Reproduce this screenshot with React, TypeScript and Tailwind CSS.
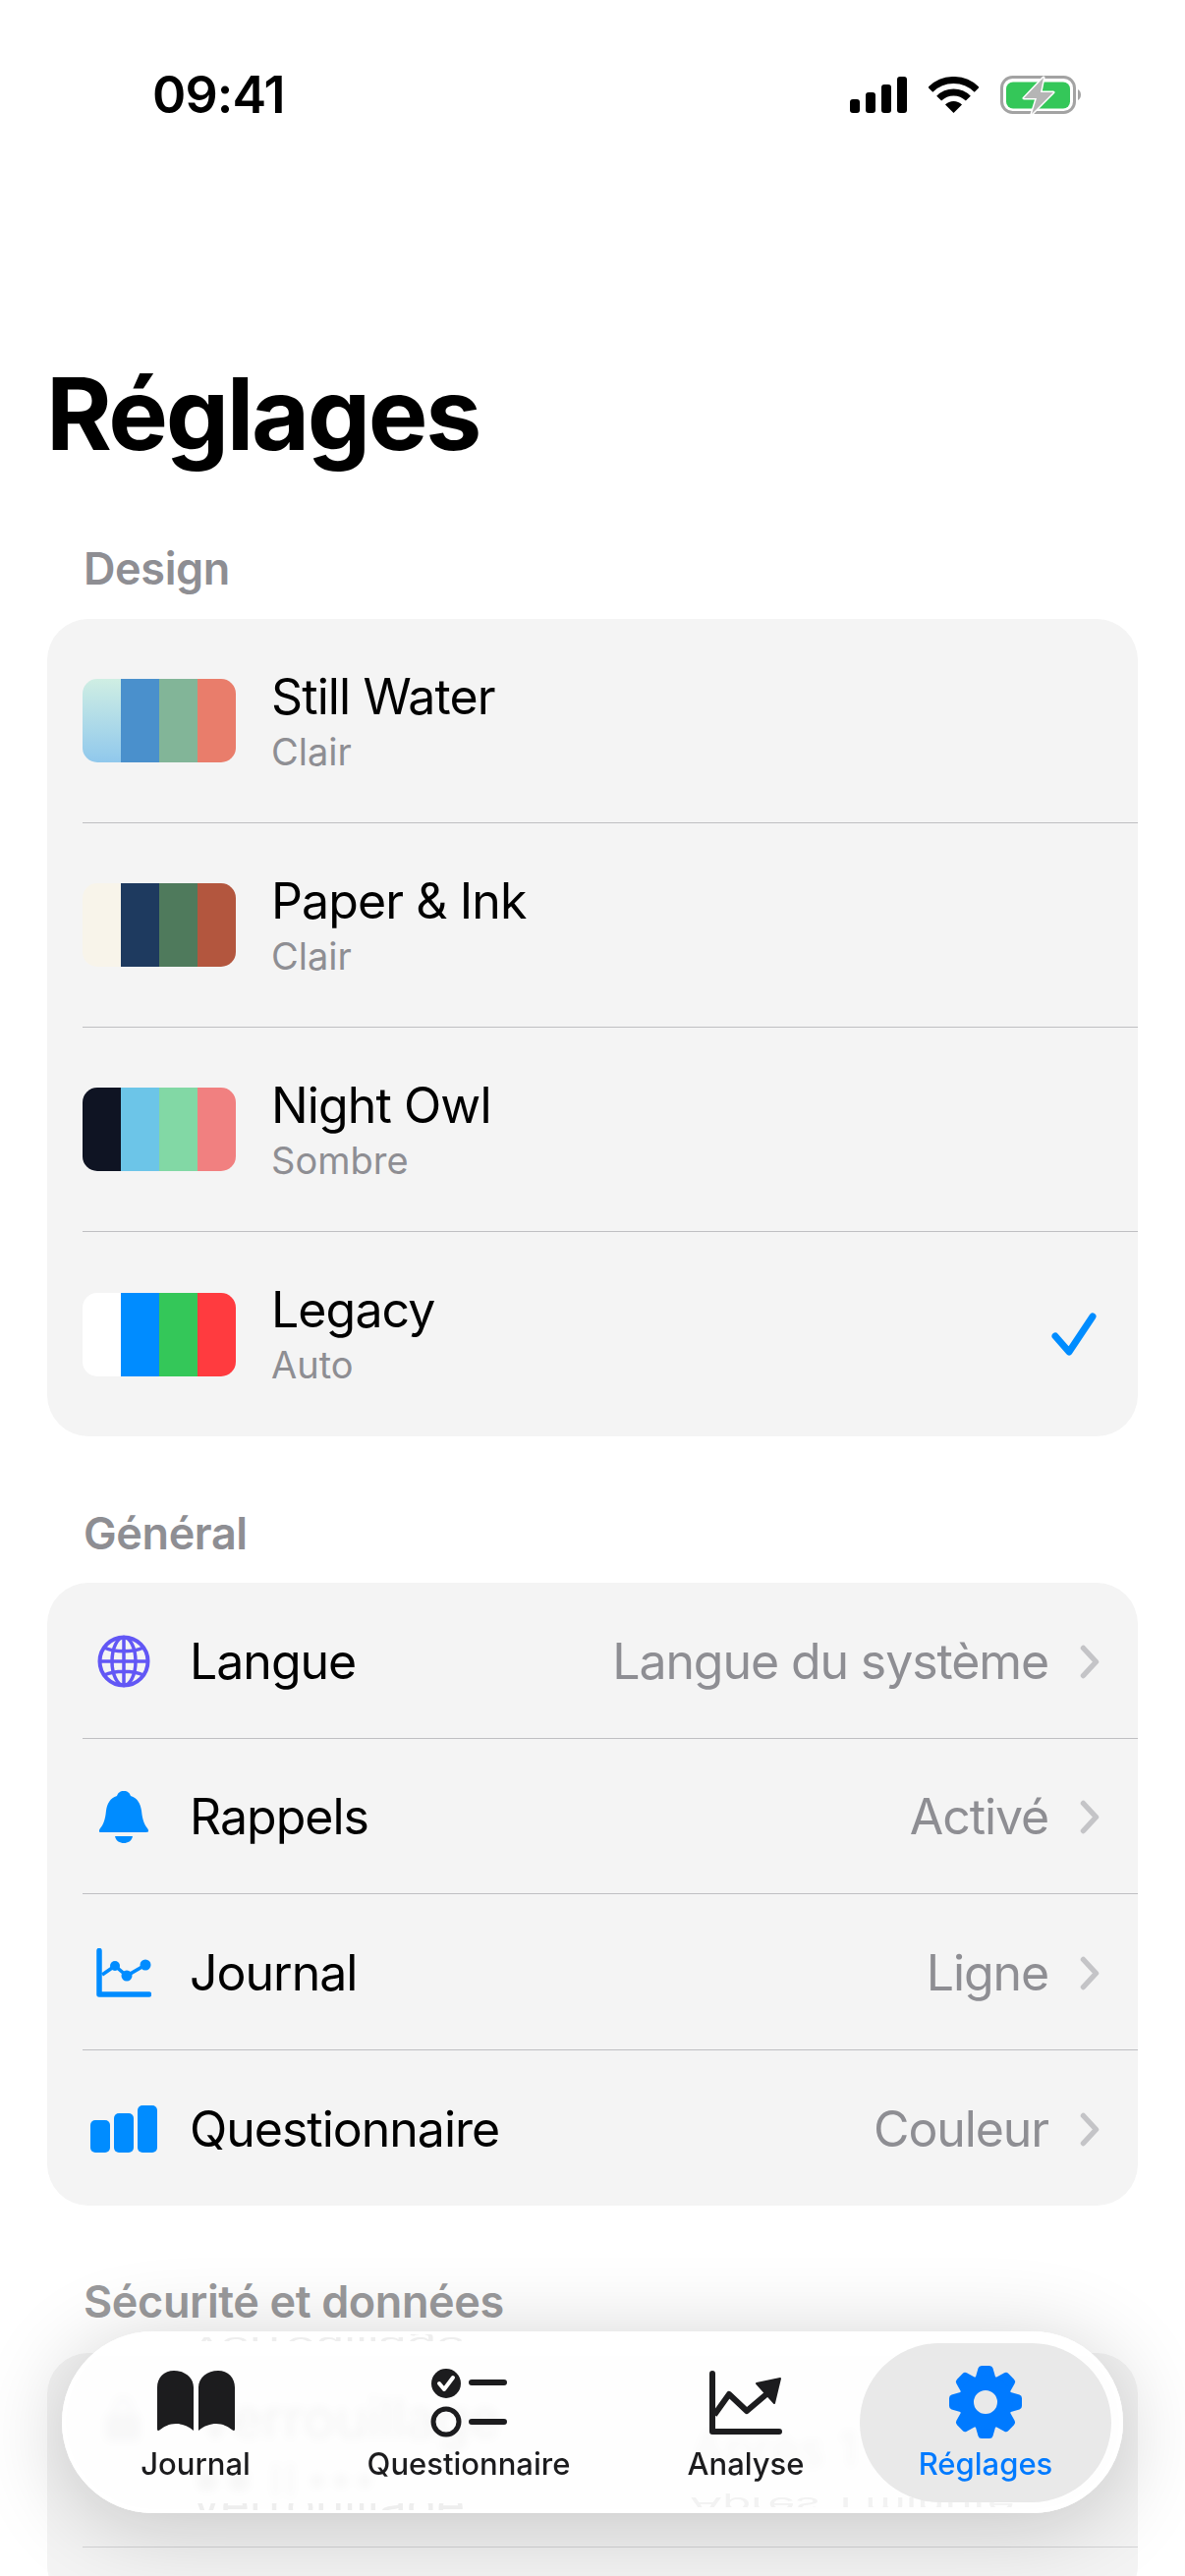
import React from 'react';

type ThemeRow = { name: string; mode: string; colors: string[]; selected?: boolean };

const themes: ThemeRow[] = [
  { name: 'Still Water', mode: 'Clair', colors: ['bg-gradient-to-b from-[#cfeee3] to-[#90c8ec]', 'bg-[#4a90cc]', 'bg-[#82b598]', 'bg-[#e97d6b]'] },
  { name: 'Paper & Ink', mode: 'Clair', colors: ['bg-[#f8f4ea]', 'bg-[#1e3a5f]', 'bg-[#4f7a5c]', 'bg-[#b3563e]'] },
  { name: 'Night Owl', mode: 'Sombre', colors: ['bg-[#0f1423]', 'bg-[#6cc5e8]', 'bg-[#82d8a5]', 'bg-[#f18080]'] },
  { name: 'Legacy', mode: 'Auto', colors: ['bg-white', 'bg-[#008cff]', 'bg-[#34c759]', 'bg-[#ff3b3f]'], selected: true },
];

const Globe = () => (
  <svg width="54" height="54" viewBox="0 0 54 54" fill="none" stroke="#6257f5">
    <circle cx="27" cy="27" r="24.5" strokeWidth="4" />
    <ellipse cx="27" cy="27" rx="12" ry="24.5" strokeWidth="3.5" />
    <path d="M27 2v50M2 27h50M7 13c11 5 29 5 40 0M7 41c11-5 29-5 40 0" strokeWidth="3.5" />
  </svg>
);

const Bell = () => (
  <svg width="50" height="53" viewBox="0 0 50 53" fill="#008cff">
    <path d="M25 0c-4 0-6 2-7 5C11 7 8 13 7 20 6 30 4 34 1 38c-2 3-1 4 1 4h46c2 0 3-1 1-4-3-4-5-8-6-18-1-7-4-13-11-15-1-3-3-5-7-5Z" />
    <path d="M16 46h18c-1 5-5 7-9 7s-8-2-9-7Z" />
  </svg>
);

const LineChart = () => (
  <svg width="56" height="50" viewBox="0 0 56 50" fill="none">
    <path d="M3 2.500V47H53.500" stroke="#008cff" strokeWidth="5.500" strokeLinecap="round" strokeLinejoin="round" />
    <path d="M6 27l13-9 12 10 19-11" stroke="#008cff" strokeWidth="3.500" />
    <circle cx="19" cy="18" r="5" fill="#008cff" />
    <circle cx="31" cy="28" r="5.500" fill="#008cff" />
    <circle cx="50" cy="17" r="5.500" fill="#008cff" />
  </svg>
);

const Bars = () => (
  <div className="flex h-[48px] w-[68px] items-end gap-[4px]">
    <div className="h-[33px] w-[20px] rounded-[5px] bg-[#008cff]" />
    <div className="h-[40px] w-[20px] rounded-[5px] bg-[#008cff]" />
    <div className="h-[48px] w-[20px] rounded-[5px] bg-[#008cff]" />
  </div>
);

const Chevron = () => (
  <svg width="20" height="35" viewBox="0 0 20 35" fill="none" stroke="#c4c4c7" strokeWidth="5.500" strokeLinecap="round" strokeLinejoin="round">
    <path d="M3.500 3.500l13 14-13 14" />
  </svg>
);

const general = [
  { label: 'Langue', value: 'Langue du système', icon: <Globe /> },
  { label: 'Rappels', value: 'Activé', icon: <Bell /> },
  { label: 'Journal', value: 'Ligne', icon: <LineChart /> },
  { label: 'Questionnaire', value: 'Couleur', icon: <Bars /> },
];

const SectionTitle = ({ children, faded }: { children: React.ReactNode; faded?: boolean }) => (
  <div className={`pl-[85px] text-[45px] leading-[54px] font-semibold tracking-[-0.4px] ${faded ? 'text-[#9a9a9c]' : 'text-[#8e8e93]'}`}>{children}</div>
);

const BookIcon = () => (
  <svg width="79" height="63" viewBox="0 0 79 63" fill="#1c1c1e">
    <path d="M0 17C0 7 7 0 17 0c11 0 20 7 20 17v44c-6-5-12-7-18-7-7 0-12 3-16 6-2 2-3 1-3-1Z" />
    <path d="M79 17C79 7 72 0 62 0 51 0 42 7 42 17v44c6-5 12-7 18-7 7 0 12 3 16 6 2 2 3 1 3-1Z" />
  </svg>
);

const ChecklistIcon = () => (
  <svg width="78" height="72" viewBox="0 0 78 72" fill="none">
    <circle cx="16" cy="16" r="15" fill="#1c1c1e" />
    <path d="M9 16l5 6 9-12" stroke="#fff" strokeWidth="4" strokeLinecap="round" strokeLinejoin="round" />
    <circle cx="16" cy="55" r="13" stroke="#1c1c1e" strokeWidth="5" />
    <path d="M42 15h33M42 55h33" stroke="#1c1c1e" strokeWidth="6" strokeLinecap="round" />
  </svg>
);

const TrendIcon = () => (
  <svg width="74" height="65" viewBox="0 0 74 65" fill="none">
    <path d="M3 3v59h68" stroke="#1c1c1e" strokeWidth="6" strokeLinecap="round" strokeLinejoin="round" />
    <path d="M5 45l15-21 18 17 20-17" stroke="#1c1c1e" strokeWidth="6" strokeLinejoin="round" />
    <path d="M72 8L48 13l18 20Z" fill="#1c1c1e" stroke="#1c1c1e" strokeWidth="2" strokeLinejoin="round" />
  </svg>
);

const GearIcon = () => (
  <svg width="74" height="74" viewBox="-37 -37 74 74" fill="#007aff">
    {[0, 45, 90, 135, 180, 225, 270, 315].map((a) => (
      <path key={a} d="M-10.500-24L-7.500-34.500Q-6.800-37-4-37H4Q6.800-37 7.500-34.500L10.500-24Z" transform={`rotate(${a})`} />
    ))}
    <path fillRule="evenodd" d="M0-27.500a27.500 27.500 0 1 0 0 55a27.500 27.500 0 1 0 0-55ZM0-12a12 12 0 1 1 0 24a12 12 0 1 1 0-24Z" />
  </svg>
);

export default function App() {
  return (
    <div className="relative h-[2622px] w-[1206px] overflow-hidden bg-white [font-family:Inter,sans-serif] text-black">
      {/* status bar */}
      <div className="flex h-[130px] items-start justify-between pt-[70px] pr-[106px] pl-[155px]">
        <span className="text-[52px] leading-[54px] font-semibold tracking-[-0.9px]">09:41</span>
        <div className="flex items-start pt-[8px]">
          <svg width="58" height="37" viewBox="0 0 58 37" fill="#000">
            <rect x="0" y="23" width="10" height="14" rx="3" />
            <rect x="16" y="16" width="10" height="21" rx="3" />
            <rect x="32" y="8" width="10" height="29" rx="3" />
            <rect x="48" y="0" width="10" height="37" rx="3" />
          </svg>
          <svg className="ml-[22px]" width="51" height="37" viewBox="0 0 51 37" fill="none" stroke="#000" strokeWidth="7">
            <path d="M1.800 13.300A33.500 33.500 0 0 1 49.200 13.300" />
            <path d="M10.650 22.150A21 21 0 0 1 40.350 22.150" />
            <path d="M25.500 37L17 28.500A12 12 0 0 1 34 28.500Z" fill="#000" stroke="none" />
          </svg>
          <svg className="mt-[-1px] ml-[22px]" width="82" height="40" viewBox="0 0 82 40" fill="none">
            <rect x="1.500" y="1.500" width="74" height="36" rx="11" stroke="#a3a3a3" strokeWidth="3" />
            <rect x="6" y="6.500" width="65" height="27" rx="7" fill="#34c759" />
            <path d="M79 14c2 1 3 3 3 5.500S81 24 79 25Z" fill="#a3a3a3" />
            <path d="M44 2L24 23h13l-5 16 22-22H41Z" fill="#b5b5b5" stroke="#fff" strokeWidth="3" strokeLinejoin="round" paintOrder="stroke" />
          </svg>
        </div>
      </div>

      <h1 className="mt-[230px] pl-[47px] text-[102px] leading-[122px] font-bold tracking-[-2.4px]">Réglages</h1>

      {/* Design */}
      <div className="mt-[70px]">
        <SectionTitle>Design</SectionTitle>
        <div className="mx-[48px] mt-[24px] overflow-hidden rounded-[42px] bg-[#f4f4f4]">
          {themes.map((t, i) => (
            <div key={t.name} className={`ml-[36px] flex h-[208px] items-center pr-[42px] ${i < themes.length - 1 ? 'border-b border-[#bfbfc2]' : ''}`}>
              <div className="flex h-[85px] w-[156px] overflow-hidden rounded-[15px]">
                {t.colors.map((c) => (
                  <div key={c} className={`h-full flex-1 ${c}`} />
                ))}
              </div>
              <div className="ml-[36px] flex-1">
                <div className="text-[50px] leading-[58px] tracking-[-0.9px]">{t.name}</div>
                <div className="mt-[4px] text-[38px] leading-[46px] text-[#8e8e93]">{t.mode}</div>
              </div>
              {t.selected && (
                <svg width="46" height="44" viewBox="0 0 46 44" fill="none" stroke="#008cff" strokeWidth="7" strokeLinecap="round" strokeLinejoin="round">
                  <path d="M4 24l14 16L42 4" />
                </svg>
              )}
            </div>
          ))}
        </div>
      </div>

      {/* Général */}
      <div className="mt-[72px]">
        <SectionTitle>Général</SectionTitle>
        <div className="mx-[48px] mt-[23px] overflow-hidden rounded-[42px] bg-[#f4f4f4]">
          {general.map((g, i) => (
            <div key={g.label} className={`ml-[36px] flex h-[158.5px] items-center pt-[3px] pr-[39px] ${i < general.length - 1 ? 'border-b border-[#bfbfc2]' : ''}`}>
              <div className="flex w-[84px] shrink-0 justify-center">{g.icon}</div>
              <div className="ml-[25px] flex-1 text-[50px] tracking-[-1px]">{g.label}</div>
              <div className="mr-[32px] text-[50px] tracking-[-1.1px] text-[#8e8e93]">{g.value}</div>
              <Chevron />
            </div>
          ))}
        </div>
      </div>

      {/* Sécurité et données, mostly hidden by the tab bar */}
      <div className="mt-[71px]">
        <SectionTitle faded>Sécurité et données</SectionTitle>
        <div className="mx-[48px] mt-[25px] rounded-[42px] bg-[#f4f4f4] pb-[60px]">
          <div className="ml-[36px] flex h-[198px] items-start border-b border-[#d4d4d6] pr-[39px]">
            <svg width="36" height="48" viewBox="0 0 36 48" fill="#b4b4b8" className="mt-[42px] ml-[23px]">
              <path d="M8 20v-8a10 10 0 0 1 20 0v8h-5v-8a5 5 0 0 0-10 0v8Z" />
              <rect x="0" y="20" width="36" height="28" rx="5" />
            </svg>
            <div className="mt-[37px] ml-[57px] flex-1">
              <div className="text-[56px] leading-[60px] tracking-[-0.6px] text-[#888888]">Verrouillage</div>
              <div className="mt-[15px] flex h-[35px] items-center gap-[10px]">
                <div className="h-[22px] w-[22px] rounded-full bg-[#aaaaaa]" />
                <div className="h-[22px] w-[22px] rounded-full bg-[#aaaaaa]" />
                <div className="ml-[14px] h-[35px] w-[5px] bg-[#aaaaaa]" />
                <div className="h-[35px] w-[5px] bg-[#aaaaaa]" />
                <div className="ml-[8px] h-[14px] w-[14px] rounded-full bg-[#aaaaaa]" />
                <div className="h-[14px] w-[14px] rounded-full bg-[#aaaaaa]" />
                <div className="h-[14px] w-[14px] rounded-full bg-[#aaaaaa]" />
              </div>
            </div>
            <div className="mt-[68px] mr-[77px] text-[50px] leading-[60px] tracking-[-0.6px] text-[#aaaaaa]">Après 1 minute</div>
          </div>
        </div>
      </div>

      {/* tab bar */}
      <div className="absolute top-[2373px] left-[63px] flex h-[185px] w-[1080px] items-center overflow-hidden rounded-[93px] bg-white/90 px-[12px] shadow-[inset_0_0_0_4px_rgba(255,255,255,0.7),0_12px_90px_rgba(0,0,0,0.2)] backdrop-blur-[5px]">
        {/* refraction of the rows along the glass edge */}
        <div className="absolute top-[3px] left-[130px] h-[7px] overflow-hidden">
          <div className="origin-top -scale-y-50 translate-y-[24px] text-[50px] leading-[48px] tracking-[-0.2px] text-[#eeeeee]">Verrouillage</div>
        </div>
        <div className="absolute bottom-[3px] left-[130px] h-[7px] overflow-hidden">
          <div className="-translate-y-[24px] text-[50px] leading-[48px] tracking-[-0.2px] text-[#eeeeee]">Verrouillage</div>
        </div>
        <div className="absolute bottom-[6px] left-[639px] h-[14px] overflow-hidden">
          <div className="origin-top -scale-y-50 translate-y-[24px] text-[48px] leading-[48px] tracking-[-0.2px] text-[#f2f2f2]">Après 1 minute</div>
        </div>

        <div className="relative flex h-[162px] w-[248px] flex-col items-center pt-[28px]">
          <div className="flex h-[75px] items-start"><BookIcon /></div>
          <span className="text-[31px] leading-[40px] font-medium text-[#1c1c1e]">Journal</span>
        </div>
        <div className="relative flex h-[162px] w-[308px] flex-col items-center pt-[25px]">
          <div className="flex h-[78px] items-start"><ChecklistIcon /></div>
          <span className="text-[31px] leading-[40px] font-medium text-[#1c1c1e]">Questionnaire</span>
        </div>
        <div className="relative ml-[12px] flex h-[162px] w-[232px] flex-col items-center pt-[28px]">
          <div className="flex h-[75px] items-start"><TrendIcon /></div>
          <span className="text-[31px] leading-[40px] font-medium text-[#1c1c1e]">Analyse</span>
        </div>
        <div className="relative flex h-[162px] w-[256px] flex-col items-center rounded-[81px] bg-[#e9e9e9] pt-[23px]">
          <div className="flex h-[80px] items-start"><GearIcon /></div>
          <span className="text-[31px] leading-[40px] font-medium text-[#007aff]">Réglages</span>
        </div>
      </div>
    </div>
  );
}
